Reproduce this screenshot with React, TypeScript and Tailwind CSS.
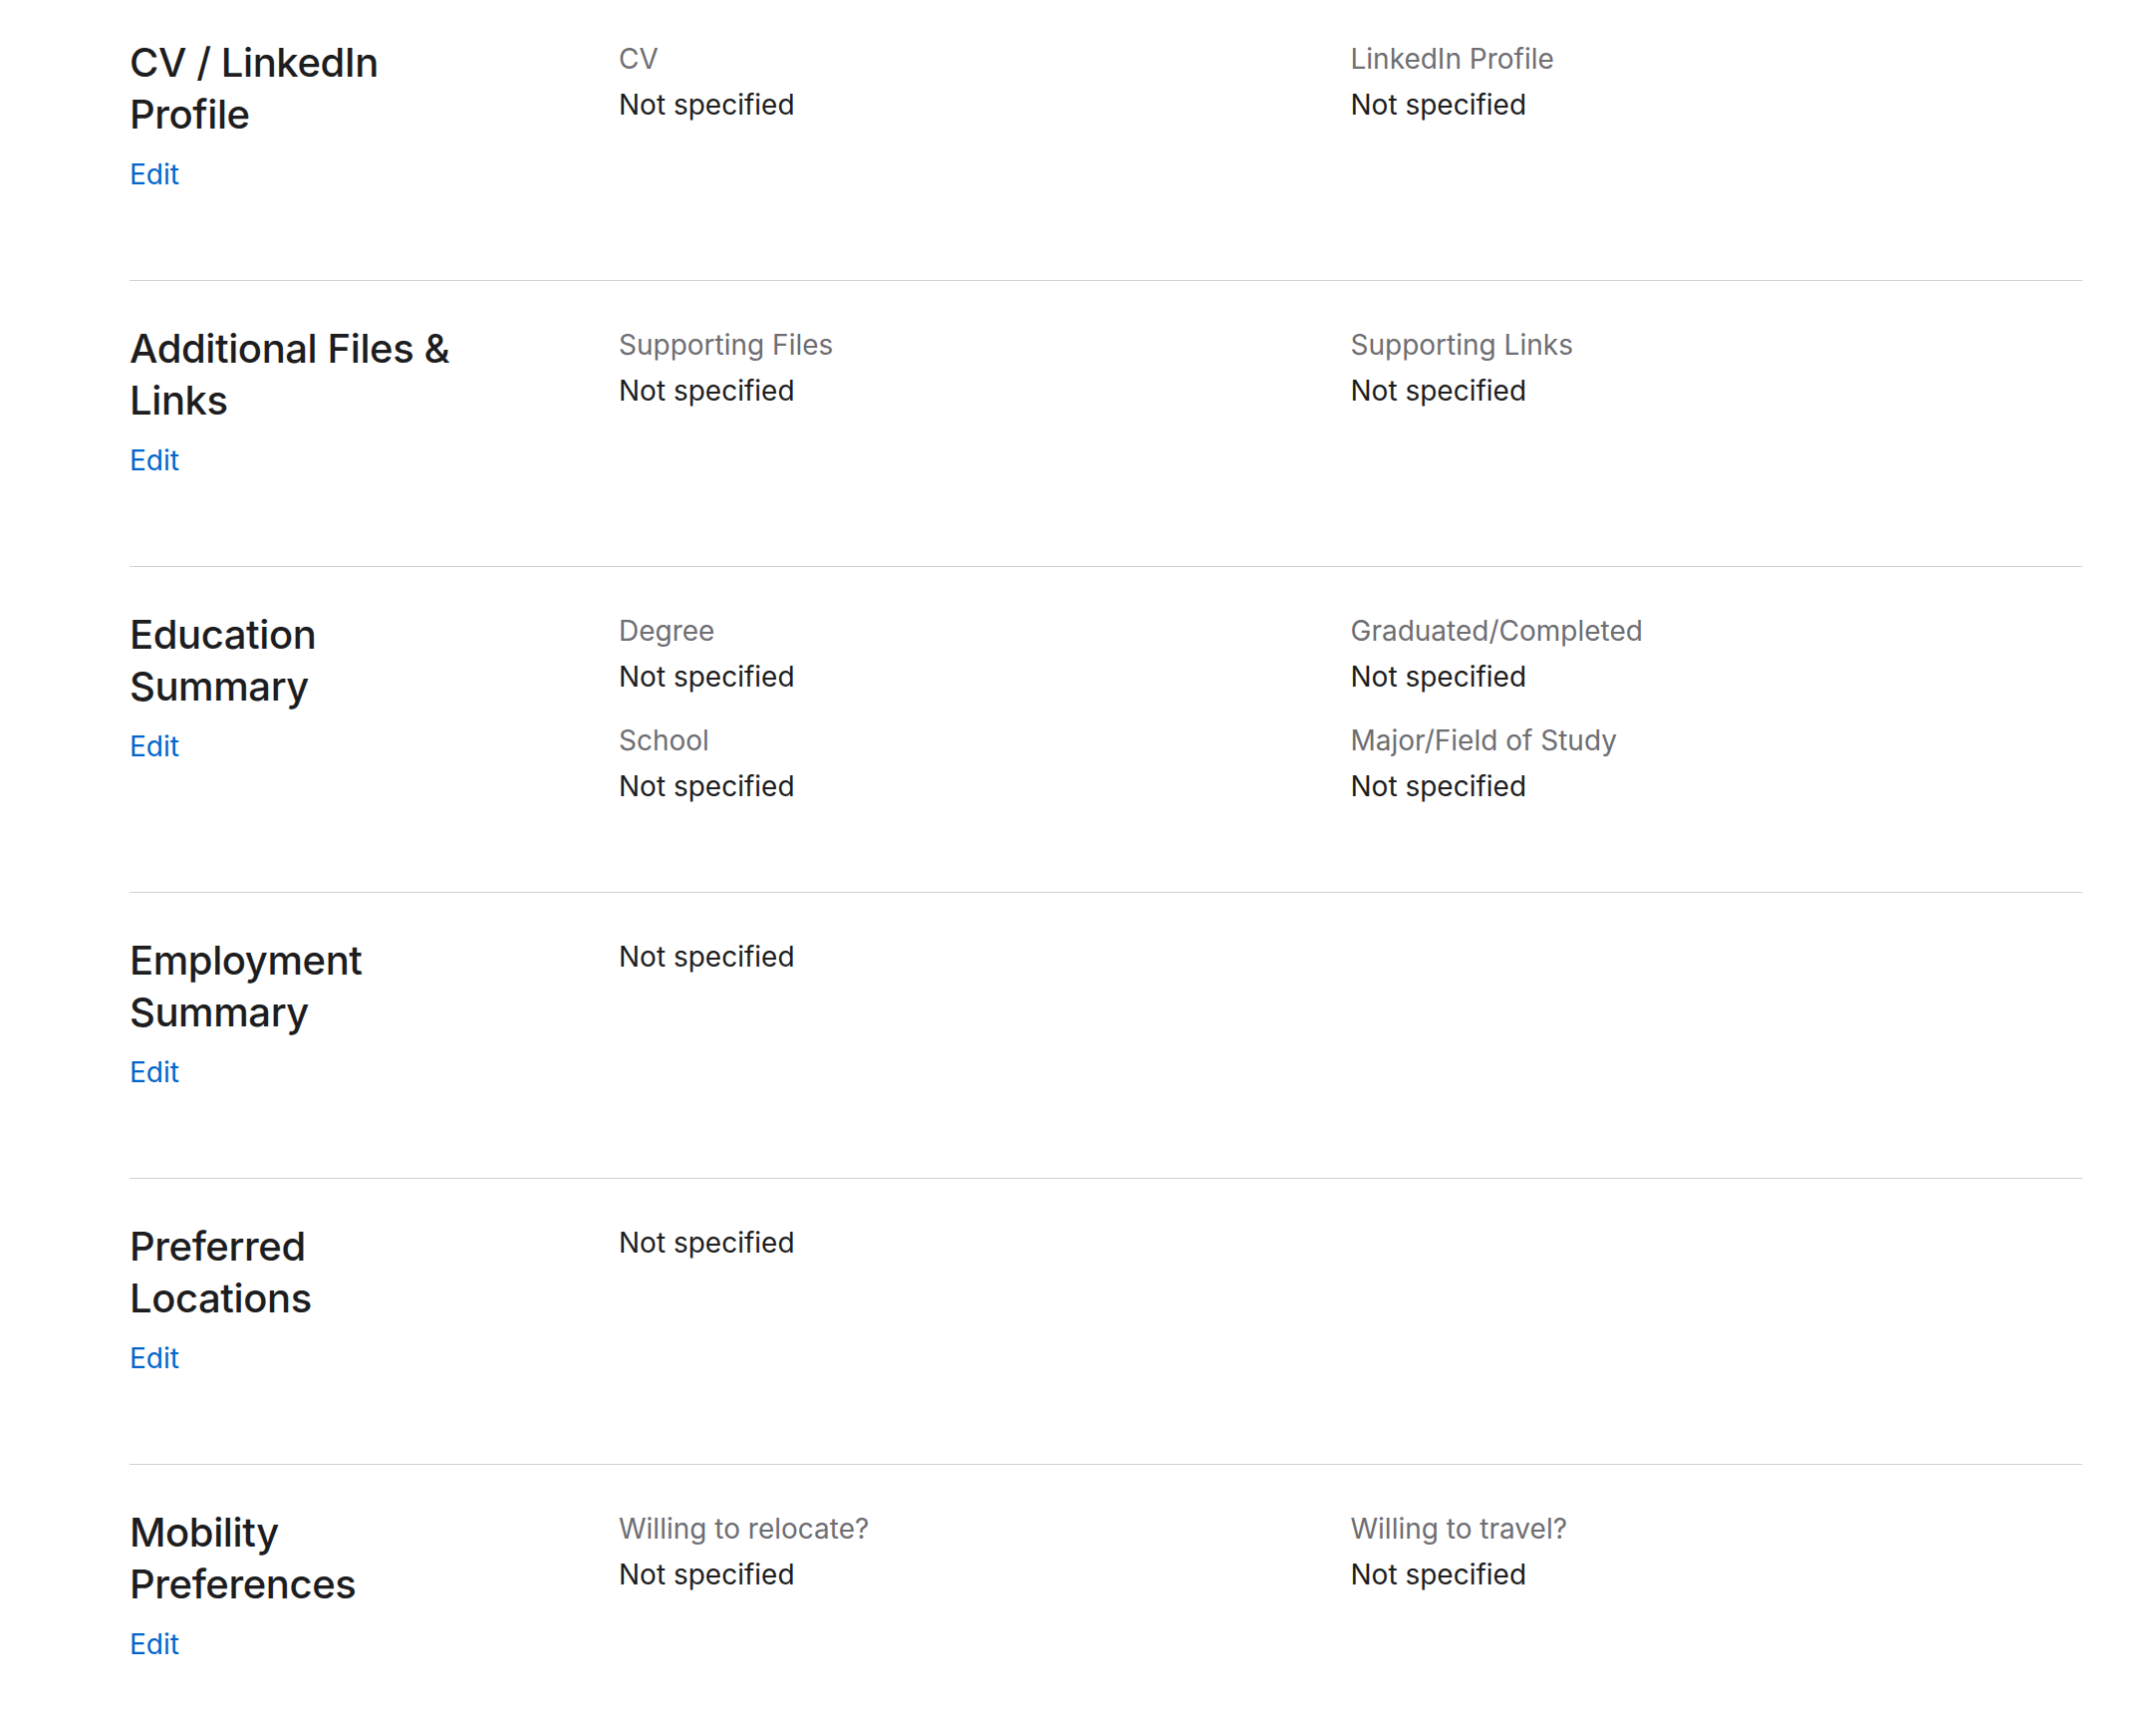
import React from 'react';

interface Field {
  label?: string;
  value: string;
}

interface Section {
  title: string;
  rows: Field[][];
}

const sections: Section[] = [
  {
    title: 'CV / LinkedIn Profile',
    rows: [[{ label: 'CV', value: 'Not specified' }, { label: 'LinkedIn Profile', value: 'Not specified' }]],
  },
  {
    title: 'Additional Files & Links',
    rows: [[{ label: 'Supporting Files', value: 'Not specified' }, { label: 'Supporting Links', value: 'Not specified' }]],
  },
  {
    title: 'Education Summary',
    rows: [
      [{ label: 'Degree', value: 'Not specified' }, { label: 'Graduated/Completed', value: 'Not specified' }],
      [{ label: 'School', value: 'Not specified' }, { label: 'Major/Field of Study', value: 'Not specified' }],
    ],
  },
  {
    title: 'Employment Summary',
    rows: [[{ value: 'Not specified' }]],
  },
  {
    title: 'Preferred Locations',
    rows: [[{ value: 'Not specified' }]],
  },
  {
    title: 'Mobility Preferences',
    rows: [[{ label: 'Willing to relocate?', value: 'Not specified' }, { label: 'Willing to travel?', value: 'Not specified' }]],
  },
];

function FieldBlock({ field }: { field: Field }) {
  return (
    <div>
      {field.label && (
        <div className="text-[28px] leading-[42px] text-[#6e6e73] mb-[4px]">{field.label}</div>
      )}
      <div className="text-[28px] leading-[42px] text-[#1d1d1f]">{field.value}</div>
    </div>
  );
}

export default function App() {
  return (
    <div
      className="min-h-screen bg-white"
      style={{ fontFamily: 'Inter, "Noto Sans", "Liberation Sans", sans-serif' }}
    >
      <div className="ml-[130px] w-[1960px] -mt-[5px]">
        {sections.map((section, i) => (
          <div
            key={section.title}
            className={
              i === 0
                ? 'grid grid-cols-[491px_1fr] pt-[42px] pb-[85px]'
                : 'grid grid-cols-[491px_1fr] pt-[42px] pb-[85px] border-t border-[#d2d2d7]'
            }
          >
            <div>
              <h2 className="max-w-[350px] text-[40px] leading-[52px] font-medium tracking-[-0.01em] text-[#1d1d1f]">
                {section.title}
              </h2>
              <a href="#" className="block mt-[13px] text-[28px] leading-[42px] text-[#0066cc]">
                Edit
              </a>
            </div>
            <div className="grid grid-cols-2 gap-y-[22px] pt-[1px]">
              {section.rows.map((row, r) => (
                <React.Fragment key={r}>
                  {row.map((field, c) => (
                    <FieldBlock key={c} field={field} />
                  ))}
                  {row.length === 1 && <div />}
                </React.Fragment>
              ))}
            </div>
          </div>
        ))}
      </div>
    </div>
  );
}
